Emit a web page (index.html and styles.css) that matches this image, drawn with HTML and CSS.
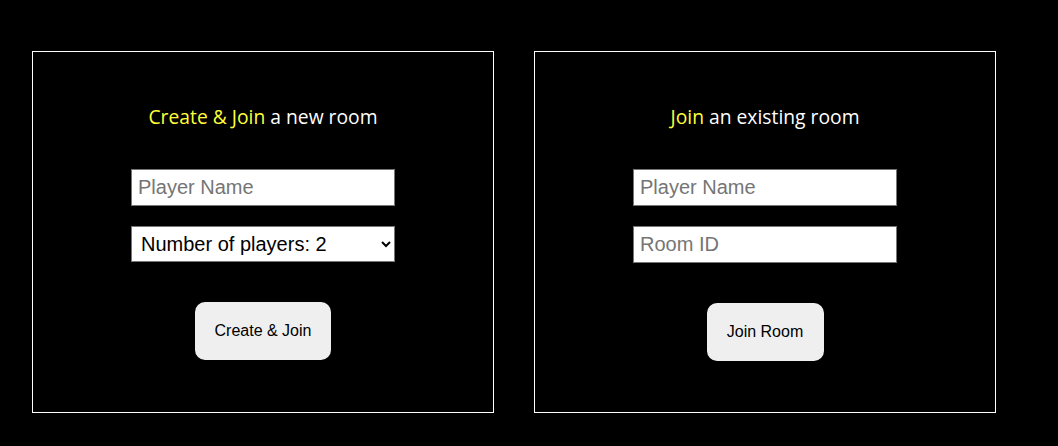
FILE: index.html
```html
<!DOCTYPE html>
<html>
<head>
<meta charset="utf-8">
<link rel="stylesheet" href="styles.css">
</head>
<body>
<div class="rooms">
  <div class="card">
    <h3 class="title"><span class="hl">Create &amp; Join</span> a new room</h3>
    <input class="field" type="text" placeholder="Player Name">
    <select class="field select">
      <option>Number of players: 2</option>
    </select>
    <button class="btn btn-create">Create &amp; Join</button>
  </div>
  <div class="card">
    <h3 class="title"><span class="hl">Join</span> an existing room</h3>
    <input class="field" type="text" placeholder="Player Name">
    <input class="field" type="text" placeholder="Room ID">
    <button class="btn btn-join">Join Room</button>
  </div>
</div>
</body>
</html>
```
FILE: styles.css
```css
html, body {
  margin: 0;
  background: #000;
}
.rooms {
  display: flex;
  gap: 40px;
  padding: 51px 0 0 32px;
}
.card {
  box-sizing: border-box;
  width: 462px;
  height: 362px;
  border: 1px solid #fff;
  display: flex;
  flex-direction: column;
  align-items: center;
  padding-top: 53px;
}
.title {
  margin: 0 0 40px;
  font-family: "Open Sans", "Noto Sans", sans-serif;
  font-weight: 400;
  font-size: 19.3px;
  line-height: 24px;
  color: #fff;
}
.hl {
  color: #ffff3a;
}
.field {
  box-sizing: border-box;
  width: 264px;
  height: 37px;
  margin: 0 0 20px;
  border: 1px solid #767676;
  background: #fff;
  font-family: "Liberation Sans", Arial, sans-serif;
  font-size: 20px;
  padding: 0 6px;
  color: #000;
}
.field::placeholder {
  color: #757575;
}
.select {
  height: 36px;
  padding: 0 5px;
}
.btn {
  margin-top: 20px;
  height: 58px;
  border: none;
  border-radius: 10px;
  background: #efefef;
  font-family: "Liberation Sans", Arial, sans-serif;
  font-size: 16px;
  color: #000;
}
.btn-create { width: 136px; }
.btn-join { width: 117px; }
```
